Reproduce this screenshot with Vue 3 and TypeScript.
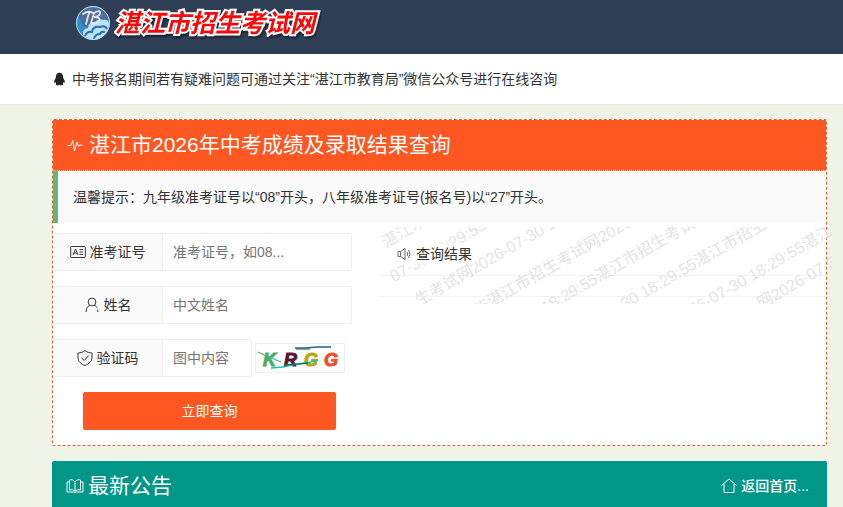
<script setup lang="ts">
import { ref } from 'vue'

interface MarkLine {
  x: number
  y: number
  lead: string
  text: string
}

const examNo = ref('')
const fullName = ref('')
const code = ref('')

const markLines: MarkLine[] = [
  { x: 11, y: 12, lead: '', text: '湛江市' },
  { x: 19, y: 46, lead: '', text: '07-30 18:29:55' },
  { x: 44, y: 70, lead: '', text: '生考试网2026-07-30 18' },
  { x: 116, y: 71, lead: '55', text: '湛江市招生考试网2026' },
  { x: 224, y: 46, lead: '18:29:55', text: '湛江市招生考试网' },
  { x: 323, y: 31, lead: '30 18:29:55', text: '湛江市招生考' },
  { x: 431, y: 14, lead: '26-07-30 18:29:55', text: '湛江' },
  { x: 386, y: 73, lead: '', text: '网2026-07-30' },
]
</script>

<template>
  <header class="top">
    <a class="logo" href="#">
      <svg class="emblem" viewBox="0 0 36 36" aria-hidden="true">
        <circle cx="18" cy="18" r="17" fill="#3f8fc6" />
        <path d="M2 14A17 17 0 0 1 34 14L31 18L24 16L18 20L10 24L4 21Z" fill="#4d6f93" />
        <path d="M3 10Q0 21 7 29L13 23L8 21Z" fill="#2f8fd6" />
        <path d="M8 30Q7 24 13 23Q13 17 20 17Q23 13 28 15Q34 14 34 20Q33 29 24 34Q14 36 8 30Z" fill="#b9e2f8" />
        <path d="M10 31Q12 26 17 27Q18 21 25 22Q30 20 32 24M19 34Q20 29 25 29Q26 26 30 27" fill="none" stroke="#2b6fae" stroke-width="2" />
        <path d="M8 9Q13 5 18 8M14 8L11 19M19 8L16 18M19 8Q26 4 25 9Q23 12 19 12Q26 12 24 16Q21 19 16 18" fill="none" stroke="#e6e3ea" stroke-width="1.8" stroke-linecap="round" />
        <circle cx="18" cy="18" r="16.5" fill="none" stroke="#c8dbe9" />
      </svg>
      <span class="brand">湛江市招生考试网</span>
    </a>
  </header>

  <div class="notice">
    <svg class="qq" viewBox="0 0 14 14" aria-hidden="true">
      <path d="M7 .8C4.700.8 3.400 2.500 3.400 4.800L3.300 6C2.200 7.500 1.500 9 1.700 10.400C1.900 11 2.500 10.500 2.900 9.900C3.100 10.600 3.400 11.100 3.900 11.600C3 12 2.900 13.200 4.400 13.300C5.600 13.400 6.400 13 7 12.700C7.600 13 8.400 13.400 9.600 13.300C11.100 13.200 11 12 10.100 11.600C10.600 11.100 10.900 10.600 11.100 9.900C11.500 10.500 12.100 11 12.300 10.400C12.500 9 11.800 7.500 10.700 6L10.600 4.800C10.600 2.500 9.300.8 7 .8Z" fill="#222" />
    </svg>
    <span>中考报名期间若有疑难问题可通过关注“湛江市教育局”微信公众号进行在线咨询</span>
  </div>

  <main class="page">
    <section class="card">
      <h1 class="title">
        <svg class="icon" viewBox="0 0 16 16" aria-hidden="true">
          <path d="M.5 8.500H4L5.800 3.500L7.500 14L10 5L11.600 9.500L12.500 8.200H15.500" />
        </svg>
        <span>湛江市2026年中考成绩及录取结果查询</span>
      </h1>
      <p class="tip">温馨提示：九年级准考证号以“08”开头，八年级准考证号(报名号)以“27”开头。</p>

      <div class="columns">
        <form class="form" @submit.prevent>
          <div class="row">
            <label for="exam-no">
              <svg class="icon" viewBox="0 0 16 16" aria-hidden="true">
                <rect x=".7" y="2.500" width="14.600" height="11" rx="1" />
                <path d="M3 11L5.500 5L8 11M4 9H7M9.500 5.500H13M9.500 8H13M9.500 10.500H13" />
              </svg>
              <span>准考证号</span>
            </label>
            <input id="exam-no" v-model="examNo" type="text" placeholder="准考证号，如08..." />
          </div>
          <div class="row">
            <label for="full-name">
              <svg class="icon" viewBox="0 0 16 16" aria-hidden="true">
                <circle cx="8" cy="5" r="3.900" />
                <path d="M5.800 8.200C3.500 9.500 2.300 11.500 2 15M10.200 8.400C12 9 12.700 9.800 13 10.800M13.500 12.600L14 15" />
              </svg>
              <span>姓名</span>
            </label>
            <input id="full-name" v-model="fullName" type="text" placeholder="中文姓名" />
          </div>
          <div class="row">
            <label for="code">
              <svg class="icon" viewBox="0 0 16 16" aria-hidden="true">
                <path d="M8 .7C6 2.300 3.500 2.800 1 3V8C1.300 11.500 4 14 8 15.500C12 14 14.700 11.500 15 8V3C12.500 2.800 10 2.300 8 .7Z" />
                <path d="M4.500 8L7.200 10.500L11.800 5.500" />
              </svg>
              <span>验证码</span>
            </label>
            <input id="code" v-model="code" class="short" type="text" placeholder="图中内容" />
            <button class="captcha" type="button">
              <svg viewBox="0 0 88 28" aria-hidden="true">
                <g class="letters">
                  <text x="7" y="22" fill="#4fa865" stroke="#4fa865">K</text>
                  <text x="28" y="22" fill="#521735" stroke="#521735">R</text>
                  <text x="48" y="22" fill="#b5a51b" stroke="#b5a51b">G</text>
                  <text x="68" y="22" fill="#ef4a2b" stroke="#ef4a2b">G</text>
                </g>
                <path d="M2 8L8 11L14 13L20 16L25 18" stroke="#3fb983" />
                <path d="M15 24L27 23L40 20L51 19L62 16" stroke="#1cc3a0" />
                <path d="M29 21L42 20L52 19" stroke="#216c70" />
                <path d="M39 4H50L61 3H75" stroke="#2a6288" />
                <path d="M40 5H54" stroke="#2f796c" />
              </svg>
            </button>
          </div>
          <button class="submit" type="submit">立即查询</button>
        </form>

        <section class="result">
          <svg class="marks" aria-hidden="true">
            <g v-for="(line, i) in markLines" :key="i" :transform="`translate(${line.x} ${line.y}) rotate(-30)`">
              <text v-if="line.lead" x="-8" y="6" text-anchor="end">{{ line.lead }}</text>
              <text x="-8" y="6">{{ line.text }}</text>
            </g>
          </svg>
          <h2>
            <span class="heading">
              <svg class="icon" viewBox="0 0 16 16" aria-hidden="true">
                <path d="M2 5.500H4.500L9 2.500V13.500L4.500 10.500H2ZM4.500 5.500V10.500M11 6Q12.500 8 11 10M12.500 4Q15.500 8 12.500 12" />
              </svg>
              <span>查询结果</span>
            </span>
          </h2>
          <div class="body"></div>
        </section>
      </div>
    </section>

    <section class="news">
      <h2>
        <svg class="icon book" viewBox="0 0 18 16" aria-hidden="true">
          <path d="M9 4C7.500 1.500 4.500 1.300 3.500 2V12C5.500 11.300 7.800 11.800 9 13.500C10.200 11.800 12.500 11.300 14.500 12V2C13.500 1.300 10.500 1.500 9 4ZM9 4V13.500M3.500 4H1V14H7.500L9 15L10.500 14H17V4H14.500" />
        </svg>
        <span>最新公告</span>
      </h2>
      <a href="#">
        <svg class="icon" viewBox="0 0 16 16" aria-hidden="true">
          <path d="M.5 7.500L8 1L15.500 7.500M3 6V14.500H13V6" />
        </svg>
        <span>返回首页...</span>
      </a>
    </section>
  </main>
</template>

<style>
body {
  margin: 0;
  background: #eff4e6;
}
</style>

<style scoped>
.top,
.notice,
.page,
.page input,
.page button {
  font-family: "Liberation Sans", "Noto Sans CJK SC", sans-serif;
  font-size: 14px;
  line-height: 24px;
  color: #333;
}

.top,
.notice,
.page,
.page * {
  box-sizing: border-box;
}

a {
  color: inherit;
  text-decoration: none;
}

.icon {
  flex: none;
  width: 16px;
  height: 16px;
  fill: none;
  stroke: currentColor;
  stroke-width: 1;
}

.top {
  height: 54px;
  padding: 5px 16px 0 75px;
  background: #2f4056;
}

.logo {
  display: inline-flex;
  align-items: center;
  gap: 4px;
}

.emblem {
  width: 36px;
  height: 36px;
}

.brand {
  font-size: 25px;
  font-style: italic;
  font-weight: 700;
  line-height: 36px;
  color: #f80808;
  -webkit-text-stroke: 4px #fff;
  paint-order: stroke fill;
  filter: drop-shadow(1px 2px 1px #17202c);
}

.notice {
  display: flex;
  align-items: center;
  gap: 5px;
  height: 50px;
  padding: 0 16px 0 52px;
  background: #fff;
  box-shadow: 0 1px 2px rgba(0, 0, 0, 0.06);
}

.qq {
  flex: none;
  width: 15px;
  height: 14px;
}

.page {
  padding: 15px 16px 0 52px;
}

.card {
  padding-bottom: 15px;
  border: 1px dashed #e0623b;
  border-radius: 2px;
  background: #fff;
}

.title {
  display: flex;
  align-items: center;
  gap: 6px;
  height: 51px;
  margin: 0;
  padding: 0 14px;
  border-bottom: 1px dotted #ffd9c8;
  background: #ff5722;
  color: #fff;
  font-size: 21px;
  font-weight: 400;
}

.tip {
  margin: 0;
  padding: 14px 15px;
  border-left: 5px solid #5fb878;
  background: #fafafa;
}

.columns {
  display: flex;
  align-items: flex-start;
  gap: 27px;
}

.form {
  flex: none;
  width: 299px;
  padding-top: 10px;
}

.row {
  display: flex;
  align-items: center;
  margin-bottom: 15px;
}

.row label {
  display: flex;
  flex: none;
  align-items: center;
  justify-content: center;
  gap: 4px;
  width: 110px;
  height: 38px;
  border: 1px solid #eee;
  border-left: 0;
  background: #fafafa;
}

.row input {
  flex: 1;
  min-width: 0;
  height: 38px;
  margin-left: -1px;
  padding: 0 10px;
  border: 1px solid #eee;
  border-radius: 0 2px 2px 0;
  background: #fff;
}

.row input::placeholder {
  color: #757575;
}

.row .short {
  flex: none;
  width: 90px;
}

.captcha {
  width: 90px;
  height: 30px;
  margin-left: 3px;
  padding: 0;
  border: 1px solid #eee;
  background: #fff;
}

.captcha svg {
  display: block;
  width: 88px;
  height: 28px;
}

.captcha path {
  fill: none;
  stroke-width: 1.3;
}

.letters {
  font-size: 18px;
  font-style: italic;
  font-weight: 700;
  stroke-width: 1;
}

.submit {
  display: block;
  width: 253px;
  height: 38px;
  margin-left: 30px;
  padding: 0;
  border: 0;
  border-radius: 2px;
  background: #ff5722;
}

.page .submit {
  color: #fff;
}

.result {
  position: relative;
  flex: 1;
  min-width: 0;
  padding-top: 10px;
}

.marks {
  position: absolute;
  top: 4px;
  left: 0;
  width: calc(100% + 6px);
  height: 77px;
  overflow: hidden;
  font-size: 16px;
  fill: #e4e4e4;
  pointer-events: none;
}

.result h2 {
  display: flex;
  align-items: center;
  height: 43px;
  margin: 0;
  padding-left: 15px;
  border-bottom: 1px solid #f2f2f2;
  font-size: 14px;
  font-weight: 400;
}

.heading {
  position: relative;
  display: flex;
  align-items: center;
  gap: 4px;
  padding: 0 2px;
  background: #fff;
  line-height: 20px;
}

.heading .icon {
  color: #666;
}

.body {
  height: 21px;
  border-bottom: 1px solid #f2f2f2;
}

.news {
  display: flex;
  align-items: center;
  justify-content: space-between;
  height: 50px;
  margin-top: 15px;
  padding: 0 18px 0 14px;
  border-radius: 2px;
  background: #009688;
  color: #fff;
}

.news h2 {
  display: flex;
  align-items: center;
  gap: 4px;
  margin: 0;
  font-size: 21px;
  font-weight: 400;
}

.news a {
  display: flex;
  align-items: center;
  gap: 4px;
  font-weight: 500;
}

.book {
  width: 18px;
}
</style>
